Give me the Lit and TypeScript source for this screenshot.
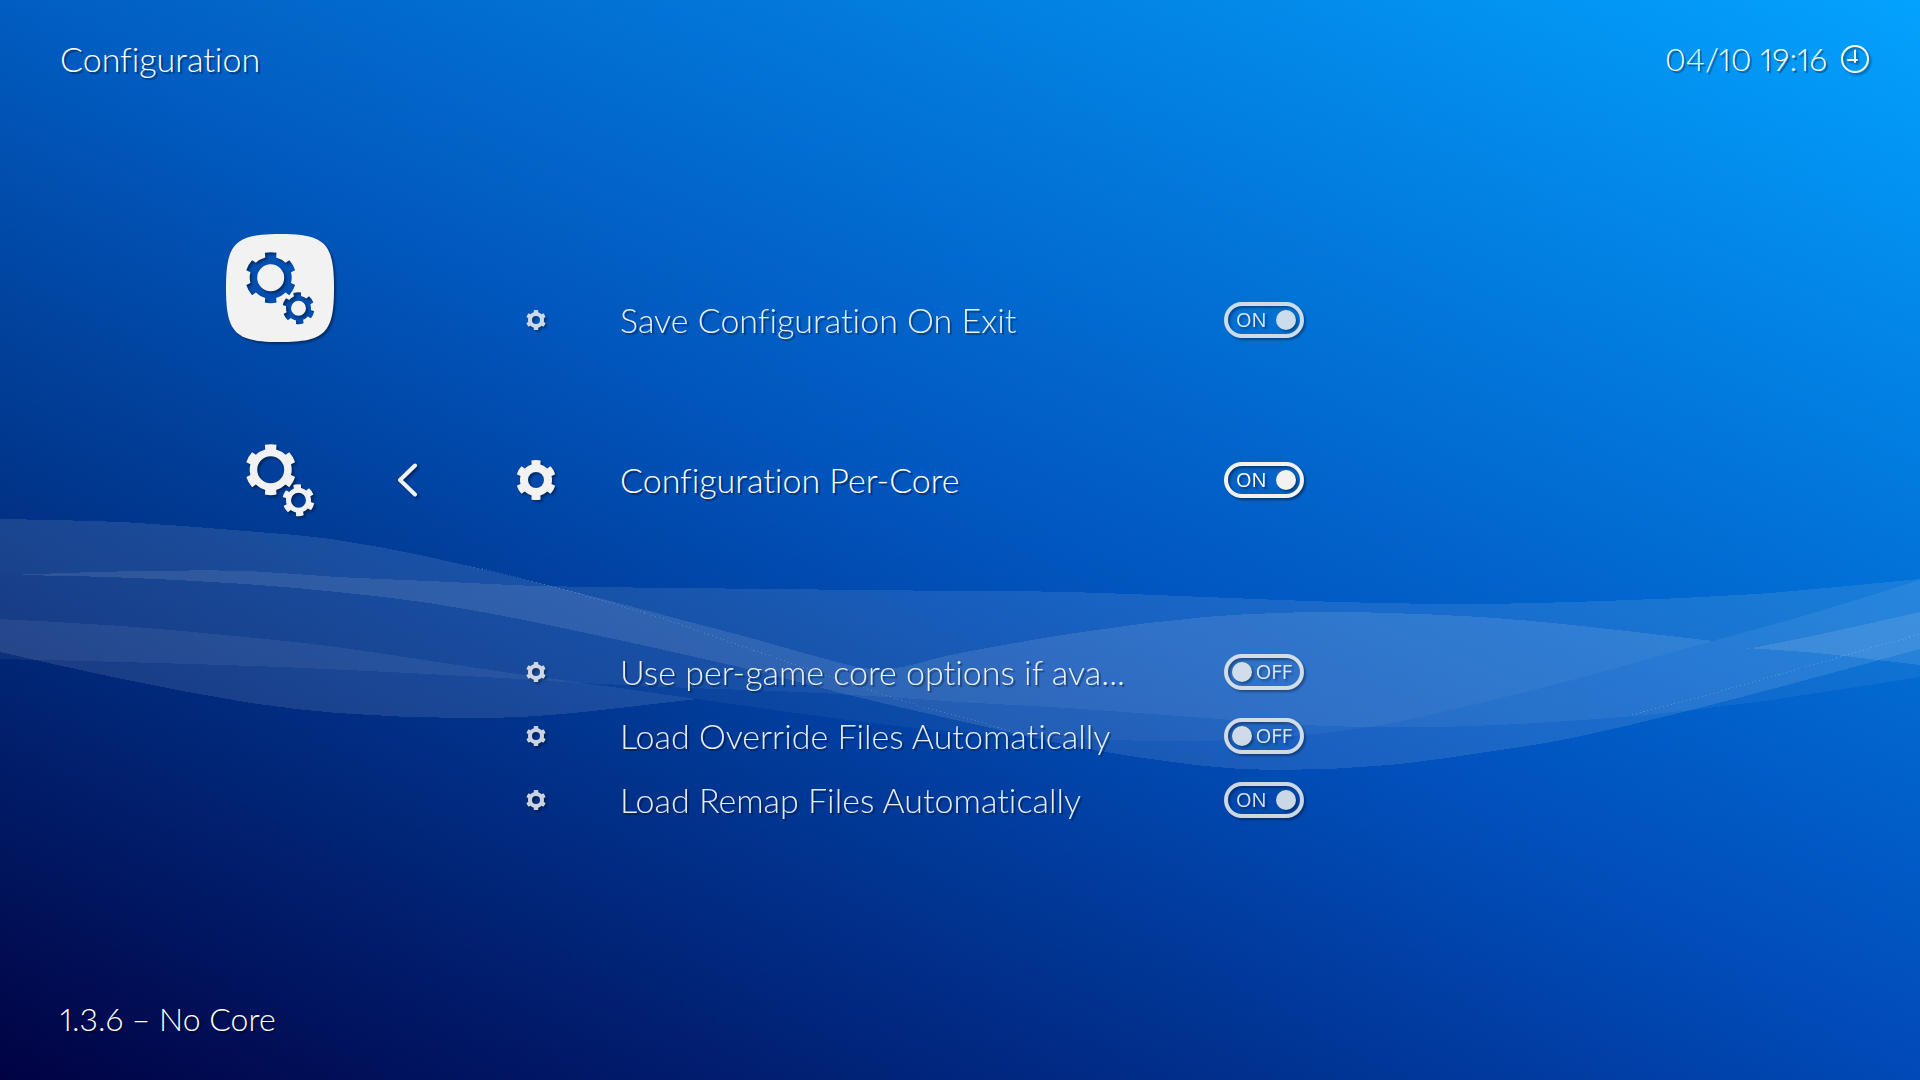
import { LitElement, html, css, svg } from "lit";
import { customElement, property, state } from "lit/decorators.js";
import { classMap } from "lit/directives/class-map.js";

type Point = [number, number];

interface Option {
  label: string;
  on: boolean;
}

/** Outline of a six-toothed gear; the centre hole is cut by the even-odd rule. */
function gear(cx: number, cy: number, outer: number, body: number, hole: number, half: number, tilt = 0): string {
  const at = (radius: number, angle: number) =>
    `${(cx + radius * Math.sin(angle)).toFixed(2)} ${(cy - radius * Math.cos(angle)).toFixed(2)}`;
  const parts: string[] = [];
  for (let i = 0; i < 6; i++) {
    const mid = ((i * 60 + tilt) * Math.PI) / 180;
    const root = Math.asin((half * 0.94) / body);
    const tip = Math.asin(half / outer);
    parts.push(
      `${i ? `A${body} ${body} 0 0 1 ` : "M"}${at(body, mid - root)}`,
      `L${at(outer, mid - tip)}`,
      `A${outer} ${outer} 0 0 1 ${at(outer, mid + tip)}`,
      `L${at(body, mid + root)}`
    );
  }
  const first = (tilt * Math.PI) / 180 - Math.asin((half * 0.94) / body);
  parts.push(`A${body} ${body} 0 0 1 ${at(body, first)}Z`);
  parts.push(
    `M${cx - hole} ${cy}A${hole} ${hole} 0 1 0 ${cx + hole} ${cy}A${hole} ${hole} 0 1 0 ${cx - hole} ${cy}Z`
  );
  return parts.join("");
}

/** Smooth curve through the points; a point given twice makes a corner. */
function curve(points: Point[]): string {
  let d = "";
  for (let i = 0; i < points.length - 1; i++) {
    const p0 = points[Math.max(i - 1, 0)];
    const p1 = points[i];
    const p2 = points[i + 1];
    const p3 = points[Math.min(i + 2, points.length - 1)];
    const k = (p2[0] - p1[0]) / 3;
    const slope = (a: Point, b: Point) => (b[0] === a[0] ? 0 : (b[1] - a[1]) / (b[0] - a[0]));
    const s1 = slope(p0, p2);
    const s2 = slope(p1, p3);
    d += `C${(p1[0] + k).toFixed(1)} ${(p1[1] + k * s1).toFixed(1)} ${(p2[0] - k).toFixed(1)} ${(p2[1] - k * s2).toFixed(1)} ${p2[0]} ${p2[1]}`;
  }
  return d;
}

function band(top: Point[], bottom: Point[]): string {
  const back = [...bottom].reverse();
  return `M${top[0].join(" ")}${curve(top)}L${back[0].join(" ")}${curve(back)}Z`;
}

const crest: Point[] = [
  [0, 575], [9, 575], [64, 573], [141, 571], [245, 571], [337, 577], [429, 581], [539, 586], [680, 588], [960, 591],
  [1070, 592], [1205, 597], [1340, 602], [1468, 604], [1603, 601], [1756, 594], [1920, 579],
];
const floor: Point[] = [
  [0, 659], [122, 662], [306, 668], [502, 678], [583, 683], [692, 688], [820, 693], [960, 702], [1082, 709],
  [1205, 718], [1327, 726], [1419, 727], [1499, 725], [1634, 716], [1756, 702], [1920, 677],
];
const seam: Point[] = [
  [0, 619], [122, 626], [245, 637], [337, 647], [490, 670], [612, 687], [697, 699],
];
const seamRest: Point[] = [
  [796, 713], [888, 725], [960, 732], [1060, 738], [1156, 741], [1254, 739], [1370, 727], [1480, 703],
  [1572, 680], [1713, 641],
];
const swell: Point[] = [
  [0, 519], [122, 522], [245, 531], [331, 539], [429, 557], [551, 586], [607, 600], [686, 621], [747, 637],
  [800, 652], [853, 666], [872, 669], [903, 667], [930, 660], [960, 653], [1082, 632], [1205, 617], [1315, 612],
  [1389, 613], [1480, 617], [1572, 625], [1713, 641],
];
const swellRight: Point[] = [[1713, 641], [1817, 612], [1920, 580]];
const trough: Point[] = [
  [0, 575], [9, 575], [110, 577], [245, 584], [337, 592], [429, 603], [539, 623], [735, 666], [857, 697], [960, 721],
  [1082, 748], [1205, 766], [1284, 770], [1389, 765], [1480, 753], [1572, 738], [1695, 709], [1817, 677],
  [1920, 649],
];
const hull: Point[] = [
  [0, 652], [122, 679], [245, 702], [337, 713], [459, 718], [551, 715], [697, 699],
];
const flareTop: Point[] = [[1747, 649], [1817, 635], [1920, 612]];
const flareBottom: Point[] = [[1747, 648], [1817, 653], [1877, 660], [1920, 665]];

const sheets = [
  { d: band(crest, floor), alpha: 0.055 },
  { d: band(crest, [...seam, ...seamRest, ...swellRight]), alpha: 0.045 },
  { d: band([...swell, ...swellRight], trough), alpha: 0.1 },
  { d: band(seam, hull), alpha: 0.1 },
  { d: band(flareTop, flareBottom), alpha: 0.1 },
];

const glints: Point[][] = [
  [[470, 566], [540, 583], [607, 602], [667, 620], [707, 634], [773, 657], [840, 680], [907, 702], [973, 720], [1013, 732]],
  [[1632, 715], [1707, 695], [1840, 657], [1920, 634]],
];

const bigGears = gear(44.7, 43.7, 25.5, 21, 13.5, 5.8) + gear(72.5, 74.2, 16, 12.5, 7.5, 3.8, -5);

@customElement("wave-backdrop")
export class WaveBackdrop extends LitElement {
  static styles = css`
    :host {
      display: block;
      overflow: hidden;
      isolation: isolate;
    }
    .sky,
    .waves {
      position: absolute;
      inset: 0;
      width: 100%;
      height: 100%;
    }
    .sky {
      isolation: isolate;
      background: linear-gradient(to right, rgb(1, 2, 67), rgb(1, 73, 183));
    }
    .sky::after {
      content: "";
      position: absolute;
      inset: 0;
      mix-blend-mode: plus-lighter;
      background: linear-gradient(to top, rgb(0, 0, 0), rgb(0, 91, 127));
    }
    .upper {
      clip-path: polygon(0 0, 100% 0, 100% 100%);
      background: linear-gradient(to right, rgb(0, 4, 123), rgb(1, 73, 183));
    }
    .upper::after {
      background: linear-gradient(to top, rgb(0, 0, 0), rgb(2, 89, 71));
    }
    .sheet {
      fill: #fff;
    }
    .glint {
      fill: none;
      stroke: #fff;
      stroke-opacity: 0.2;
      stroke-dasharray: 1 3;
    }
  `;

  render() {
    return html`
      <div class="sky"></div>
      <div class="sky upper"></div>
      <svg class="waves" viewBox="0 0 1920 1080" preserveAspectRatio="none" shape-rendering="crispEdges" aria-hidden="true">
        ${sheets.map((s) => svg`<path class="sheet" d=${s.d} fill-opacity=${s.alpha}></path>`)}
        ${glints.map((g) => svg`<path class="glint" d=${`M${g[0].join(" ")}${curve(g)}`}></path>`)}
      </svg>
    `;
  }
}

@customElement("option-row")
export class OptionRow extends LitElement {
  @property({ type: String }) label = "";
  @property({ type: Boolean }) on = false;
  @property({ type: Boolean }) active = false;

  static styles = css`
    :host {
      display: block;
    }
    .row {
      display: grid;
      grid-template-columns: 76px 72px 556px 80px;
      column-gap: 48px;
      align-items: center;
      height: 64px;
    }
    .dim .cog,
    .dim .switch {
      opacity: 0.84;
    }
    .dim .name {
      opacity: 0.9;
    }
    .back {
      display: grid;
      place-items: center;
      width: 64px;
      height: 64px;
      padding: 0;
      border: 0;
      background: none;
      cursor: pointer;
    }
    .icon {
      display: block;
      filter: drop-shadow(2px 2px 1px rgba(0, 0, 0, 0.4));
    }
    .cog {
      justify-self: center;
      fill: #f2f2f2;
    }
    .name {
      white-space: nowrap;
      cursor: pointer;
    }
    .switch {
      display: grid;
      align-items: center;
      filter: drop-shadow(2px 2px 1px rgba(0, 0, 0, 0.4));
    }
    .box {
      grid-area: 1 / 1;
      appearance: none;
      box-sizing: border-box;
      display: flex;
      align-items: center;
      width: 80px;
      height: 36px;
      margin: 0;
      padding: 0 4px;
      border: 4px solid #f2f2f2;
      border-radius: 18px;
      cursor: pointer;
    }
    .box::before {
      content: "";
      width: 20px;
      height: 20px;
      border-radius: 50%;
      background: #f2f2f2;
    }
    .box:checked {
      justify-content: flex-end;
    }
    .value {
      grid-area: 1 / 1;
      justify-self: end;
      padding: 0 12px;
      font: 400 20px/24px "Open Sans", sans-serif;
      text-shadow: none;
      pointer-events: none;
    }
    .value.on {
      justify-self: start;
    }
  `;

  private toggle(e: Event) {
    this.on = (e.target as HTMLInputElement).checked;
  }

  render() {
    const size = this.active ? 40 : 20;
    return html`
      <div class=${classMap({ row: true, dim: !this.active })}>
        ${this.active
          ? html`<button class="back" aria-label="Back">
              <svg class="icon" width="24" height="40" viewBox="0 0 24 40" fill="none" stroke="#f2f2f2" stroke-width="4" stroke-linecap="round" stroke-linejoin="round">
                <path d="M19 5.5L4 20L19 34.5"></path>
              </svg>
            </button>`
          : html`<span></span>`}
        <svg class="icon cog" width=${size} height=${size} viewBox="0 0 40 40" aria-hidden="true">
          <path fill-rule="evenodd" d=${gear(20, 20, 20, 16, 8, 4.6)}></path>
        </svg>
        <label class="name" for="box">${this.label}</label>
        <span class="switch">
          <input class="box" id="box" type="checkbox" role="switch" .checked=${this.on} @change=${this.toggle} />
          <span class=${classMap({ value: true, on: this.on })} aria-hidden="true">${this.on ? "ON" : "OFF"}</span>
        </span>
      </div>
    `;
  }
}

@customElement("app-root")
export class AppRoot extends LitElement {
  @state() private options: Option[] = [
    { label: "Save Configuration On Exit", on: true },
    { label: "Configuration Per-Core", on: true },
    { label: "Use per-game core options if ava...", on: false },
    { label: "Load Override Files Automatically", on: false },
    { label: "Load Remap Files Automatically", on: true },
  ];

  static styles = css`
    :host {
      display: block;
      color: #fff;
      font: 300 34px/40px Lato, "Open Sans", sans-serif;
      font-variant-ligatures: none;
      font-variant-numeric: proportional-nums;
      text-shadow: 2px 2px 1px rgba(0, 0, 0, 0.4);
    }
    .screen {
      position: relative;
      display: flex;
      flex-direction: column;
      min-height: 100vh;
      overflow: hidden;
    }
    .backdrop {
      position: absolute;
      inset: 0;
    }
    .bar {
      position: relative;
      display: flex;
      align-items: center;
      justify-content: space-between;
      height: 118px;
      padding: 0 49px 0 60px;
    }
    .title {
      margin: 0;
      font: inherit;
      font-variant-ligatures: none;
    }
    .clock {
      display: flex;
      align-items: center;
      gap: 12px;
      font-size: 32px;
    }
    .main {
      position: relative;
      flex: 1;
      display: flex;
      align-items: flex-start;
      padding-left: 184px;
    }
    .tabs {
      display: flex;
      flex-direction: column;
      width: 192px;
      padding-top: 74px;
    }
    .tab {
      display: grid;
      place-items: center;
      height: 192px;
      padding: 0;
      border: 0;
      background: none;
      cursor: pointer;
    }
    .icon {
      display: block;
      overflow: visible;
      fill: #f2f2f2;
      filter: drop-shadow(2px 2px 1px rgba(0, 0, 0, 0.4));
    }
    .clock .icon {
      fill: none;
      stroke: #fff;
      stroke-width: 2;
      stroke-linecap: round;
    }
    .list {
      margin: 0;
      padding: 170px 0 0;
      list-style: none;
    }
    .item.active {
      margin: 96px 0 128px;
    }
    .foot {
      height: 122px;
      font-size: 32px;
    }
  `;

  render() {
    return html`
      <div class="screen">
        <wave-backdrop class="backdrop"></wave-backdrop>
        <header class="bar">
          <h1 class="title">Configuration</h1>
          <div class="clock">
            <time>04/10 19:16</time>
            <svg class="icon" width="32" height="32" viewBox="0 0 32 32" aria-hidden="true">
              <circle cx="16" cy="16" r="13"></circle>
              <path d="M16 7.5V19M9 17H18"></path>
            </svg>
          </div>
        </header>
        <main class="main">
          <nav class="tabs" aria-label="Categories">
            <button class="tab" aria-label="Current category">
              <svg class="icon" width="108" height="108" viewBox="0 0 108 108">
                <mask id="cut">
                  <rect width="108" height="108" fill="#fff"></rect>
                  <path fill="#000" fill-rule="evenodd" d=${bigGears}></path>
                </mask>
                <path mask="url(#cut)" d="M0 54C0 9 9 0 54 0S108 9 108 54S99 108 54 108S0 99 0 54Z"></path>
              </svg>
            </button>
            <button class="tab" aria-label="Configuration">
              <svg class="icon" width="108" height="108" viewBox="0 0 108 108">
                <path fill-rule="evenodd" d=${bigGears}></path>
              </svg>
            </button>
          </nav>
          <ul class="list">
            ${this.options.map(
              (o, i) => html`<li class=${classMap({ item: true, active: i === 1 })}>
                <option-row .label=${o.label} .on=${o.on} .active=${i === 1}></option-row>
              </li>`
            )}
          </ul>
        </main>
        <footer class="bar foot">1.3.6 – No Core</footer>
      </div>
    `;
  }
}
